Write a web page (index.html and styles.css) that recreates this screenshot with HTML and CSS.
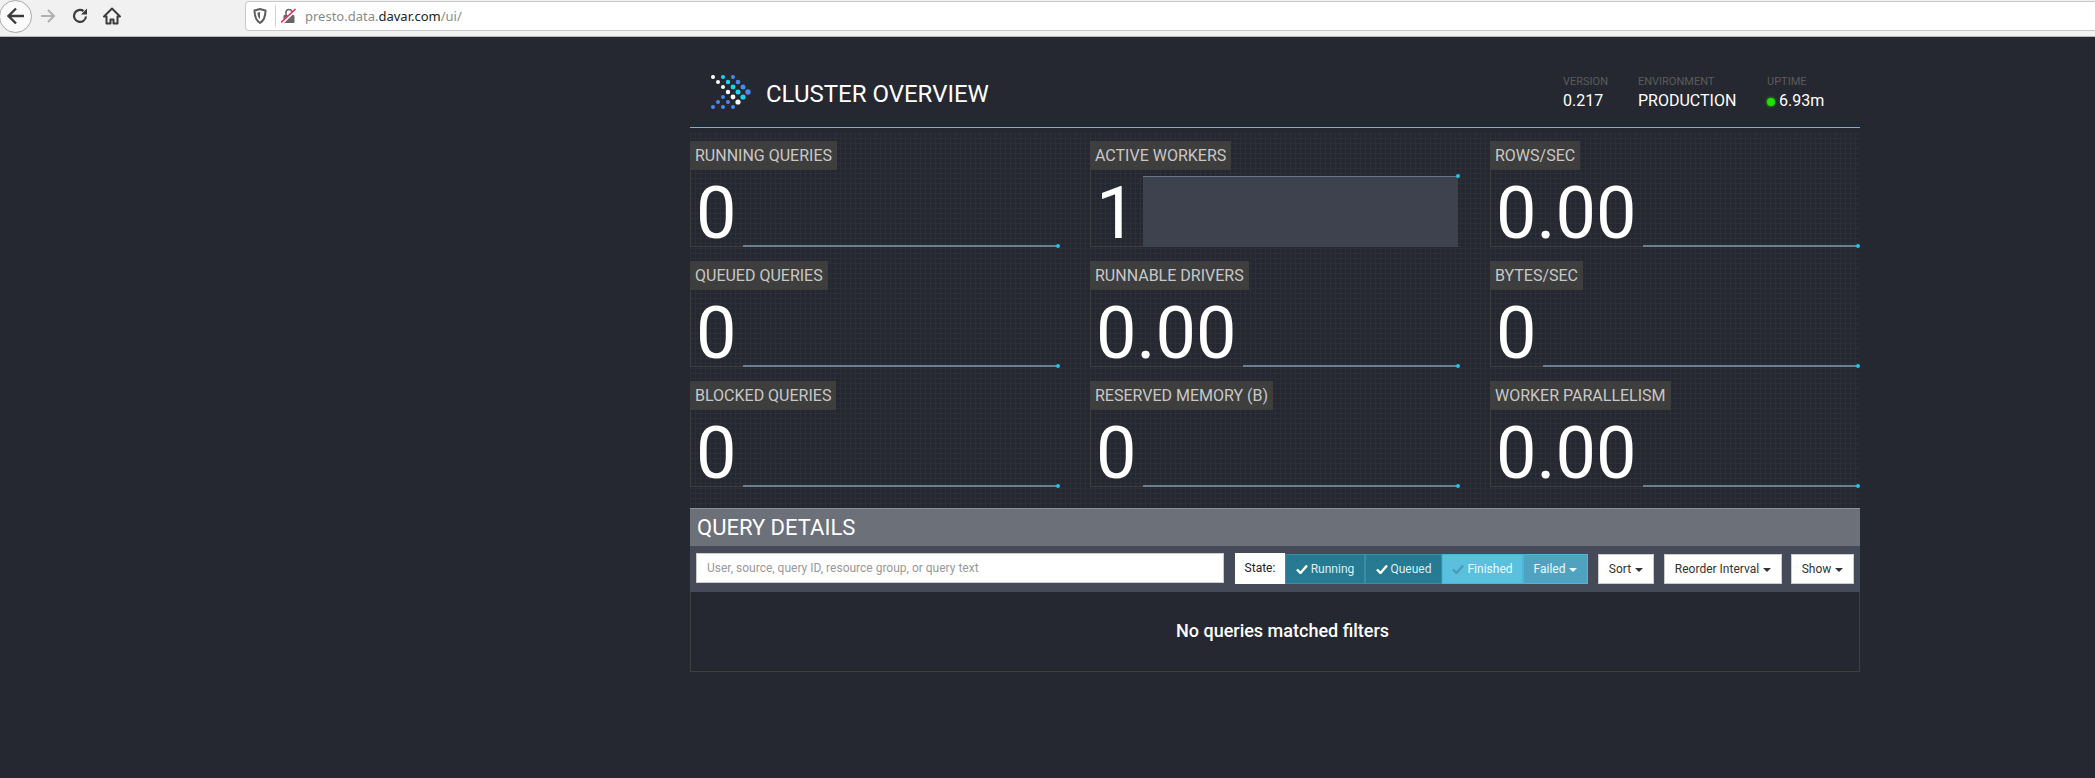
FILE: index.html
```html
<!DOCTYPE html>
<html lang="en">
<head>
<meta charset="utf-8">
<title>Cluster Overview</title>
<link rel="stylesheet" href="styles.css">
</head>
<body>
<div class="browser">
  <div class="nav-buttons">
    <span class="back"><svg width="28" height="28" viewBox="0 0 28 28"><path d="M22 14H7M14 6.500 6.500 14 14 21.500" fill="none" stroke="#3c3c3c" stroke-width="2.400"/></svg></span>
    <svg class="nav-icon forward" width="18" height="18" viewBox="0 0 18 18"><path d="M2 9h13M9 3l6 6-6 6" fill="none" stroke="#b0b0b0" stroke-width="2"/></svg>
    <svg class="nav-icon reload" width="18" height="18" viewBox="0 0 18 18"><path d="M15 9.500A6 6 0 1 1 12.500 4" fill="none" stroke="#3c3c3c" stroke-width="2.200"/><path d="M16 1.500V7.500H10Z" fill="#3c3c3c"/></svg>
    <svg class="nav-icon home" width="18" height="18" viewBox="0 0 18 18"><path d="M9 1.500 1 9.500h2.500v7h4v-4h3v4h4v-7H17Z" fill="none" stroke="#3c3c3c" stroke-width="2" stroke-linejoin="round"/></svg>
  </div>
  <div class="urlbar">
    <svg class="shield" width="14" height="16" viewBox="0 0 14 16"><path d="M1.500 2.500 7 1l5.500 1.500c0 6-1.500 10-5.500 12.500C3 12.500 1.500 8.500 1.500 2.500Z" fill="none" stroke="#5c5c5c" stroke-width="2"/><path d="M7 4v7c-2-1.500-2.500-4-2.500-6.300Z" fill="#5c5c5c"/></svg>
    <span class="divider"></span>
    <svg class="lock" width="16" height="16" viewBox="0 0 16 16"><path d="M5 7V4.500a3 3 0 0 1 6 0V7" fill="none" stroke="#666" stroke-width="1.600"/><rect x="2.500" y="7" width="11" height="8" rx="1" fill="#666"/><path d="M1 15 15 1.500" stroke="#fff" stroke-width="3"/><path d="M0 14.500 14.500 1" stroke="#f0244f" stroke-width="1.600"/></svg>
    <span class="url"><span class="faint">presto.data.</span>davar.com<span class="faint">/ui/</span></span>
  </div>
</div>

<main class="container">
  <header class="page-header">
    <svg class="logo" width="44" height="36" viewBox="0 0 44 36">
      <circle cx="3" cy="3" r="2" fill="#fff"/><circle cx="13" cy="3" r="2" fill="#16d5f5"/><circle cx="23" cy="3" r="2" fill="#4a8af0"/>
      <circle cx="8" cy="8" r="2" fill="#fff"/><circle cx="18" cy="8" r="2.200" fill="#16d5f5"/><circle cx="28" cy="8" r="2.300" fill="#4a8af0"/>
      <circle cx="13" cy="13" r="2" fill="#fff"/><circle cx="23" cy="13" r="2.400" fill="#16d5f5"/><circle cx="33" cy="13" r="2.500" fill="#4a8af0"/>
      <circle cx="18" cy="18" r="2.200" fill="#fff"/><circle cx="28" cy="18" r="2.500" fill="#16d5f5"/><circle cx="38" cy="18" r="2.700" fill="#4a8af0"/>
      <circle cx="13" cy="23" r="2" fill="#4a8af0"/><circle cx="23" cy="23" r="2.400" fill="#fff"/><circle cx="33" cy="23" r="2.600" fill="#16d5f5"/>
      <circle cx="8" cy="28" r="2" fill="#4a8af0"/><circle cx="18" cy="28" r="2" fill="#4a8af0"/><circle cx="28" cy="28" r="2.600" fill="#fff"/>
      <circle cx="3" cy="33" r="2" fill="#4a8af0"/><circle cx="13" cy="33" r="2" fill="#4a8af0"/><circle cx="23" cy="33" r="2" fill="#4a8af0"/>
    </svg>
    <h1 class="title">CLUSTER OVERVIEW</h1>
    <div class="meta">
      <div class="meta-item meta-version"><div class="meta-label">VERSION</div><div class="meta-value">0.217</div></div>
      <div class="meta-item meta-env"><div class="meta-label">ENVIRONMENT</div><div class="meta-value">PRODUCTION</div></div>
      <div class="meta-item meta-uptime"><div class="meta-label">UPTIME</div><div class="meta-value"><span class="status-dot"></span>6.93m</div></div>
    </div>
  </header>

  <section class="stats">
    <article class="stat">
      <div class="stat-label">RUNNING QUERIES</div>
      <div class="stat-box"><span class="stat-value">0</span><span class="spark"><i class="spark-dot"></i></span></div>
    </article>
    <article class="stat">
      <div class="stat-label">ACTIVE WORKERS</div>
      <div class="stat-box"><span class="stat-value">1</span><span class="spark spark-full"><i class="spark-dot spark-dot-top"></i></span></div>
    </article>
    <article class="stat">
      <div class="stat-label">ROWS/SEC</div>
      <div class="stat-box"><span class="stat-value">0.00</span><span class="spark"><i class="spark-dot"></i></span></div>
    </article>
    <article class="stat">
      <div class="stat-label">QUEUED QUERIES</div>
      <div class="stat-box"><span class="stat-value">0</span><span class="spark"><i class="spark-dot"></i></span></div>
    </article>
    <article class="stat">
      <div class="stat-label">RUNNABLE DRIVERS</div>
      <div class="stat-box"><span class="stat-value">0.00</span><span class="spark"><i class="spark-dot"></i></span></div>
    </article>
    <article class="stat">
      <div class="stat-label">BYTES/SEC</div>
      <div class="stat-box"><span class="stat-value">0</span><span class="spark"><i class="spark-dot"></i></span></div>
    </article>
    <article class="stat">
      <div class="stat-label">BLOCKED QUERIES</div>
      <div class="stat-box"><span class="stat-value">0</span><span class="spark"><i class="spark-dot"></i></span></div>
    </article>
    <article class="stat">
      <div class="stat-label">RESERVED MEMORY (B)</div>
      <div class="stat-box"><span class="stat-value">0</span><span class="spark"><i class="spark-dot"></i></span></div>
    </article>
    <article class="stat">
      <div class="stat-label">WORKER PARALLELISM</div>
      <div class="stat-box"><span class="stat-value">0.00</span><span class="spark"><i class="spark-dot"></i></span></div>
    </article>
  </section>

  <section class="details">
    <h2 class="details-title">QUERY DETAILS</h2>
    <div class="toolbar">
      <input class="search" type="text" placeholder="User, source, query ID, resource group, or query text">
      <div class="state-group">
        <span class="state-label">State:</span>
        <button class="state-btn on btn-running"><svg class="check" width="12" height="10" viewBox="0 0 12 10"><path d="M1 5.500 4.500 9 11 1.500" fill="none" stroke="currentColor" stroke-width="2.400"/></svg>Running</button>
        <button class="state-btn on btn-queued"><svg class="check" width="12" height="10" viewBox="0 0 12 10"><path d="M1 5.500 4.500 9 11 1.500" fill="none" stroke="currentColor" stroke-width="2.400"/></svg>Queued</button>
        <button class="state-btn btn-finished"><svg class="check check-dim" width="12" height="10" viewBox="0 0 12 10"><path d="M1 5.500 4.500 9 11 1.500" fill="none" stroke="currentColor" stroke-width="2.400"/></svg>Finished</button>
        <button class="state-btn btn-failed">Failed<i class="caret"></i></button>
      </div>
      <button class="tool-btn btn-sort">Sort<i class="caret"></i></button>
      <button class="tool-btn btn-reorder">Reorder Interval<i class="caret"></i></button>
      <button class="tool-btn btn-show">Show<i class="caret"></i></button>
    </div>
    <div class="empty">No queries matched filters</div>
  </section>
</main>
</body>
</html>
```
FILE: styles.css
```css
* { box-sizing: border-box; }
html, body { margin: 0; padding: 0; height: 100%; }
body {
  background: #252830;
  color: #fff;
  font-family: Roboto, "Liberation Sans", sans-serif;
  overflow: hidden;
}

.browser {
  height: 37px;
  background: #f1f1f1;
  border-bottom: 1px solid #b8b8b8;
  display: flex;
  align-items: flex-start;
}
.nav-buttons { width: 245px; display: flex; align-items: center; height: 32px; }
.back {
  width: 33px; height: 33px; margin-left: -1px;
  border-radius: 50%;
  background: #fbfbfb;
  border: 1px solid #a8a8a8;
  display: flex; align-items: center; justify-content: center;
}
.nav-icon { flex: none; }
.forward { margin-left: 7px; }
.reload { margin-left: 14px; }
.home { margin-left: 14px; }
.urlbar {
  flex: 1;
  height: 30px;
  margin-top: 1px;
  background: #fff;
  border: 1px solid #c8c8c8;
  border-right: 0;
  border-radius: 4px 0 0 4px;
  display: flex;
  align-items: center;
  padding-left: 7px;
  font-family: "Noto Sans", sans-serif;
  font-size: 13px;
}
.shield { flex: none; }
.divider { width: 1px; height: 22px; background: #d0d0d0; margin: 0 5px 0 8px; }
.lock { margin-right: 8px; flex: none; }
.url { color: #222; }
.faint { color: #8a8a8a; }

.container { width: 1170px; margin-left: 690px; }

.page-header {
  height: 91px;
  border-bottom: 1px solid #3fcbe8;
  display: flex;
  align-items: flex-start;
  padding-left: 20px;
}
.logo { margin-top: 37px; flex: none; }
.title {
  margin: 43px 0 0 12px;
  font-size: 24px;
  font-weight: 400;
  line-height: 28px;
}
.meta { margin-left: auto; display: flex; padding-top: 38px; }
.meta-label { font-size: 11px; line-height: 14px; color: #5c5c5c; }
.meta-value { font-size: 16px; line-height: 20px; margin-top: 2px; white-space: nowrap; }
.meta-version { width: 75px; }
.meta-env { width: 129px; }
.meta-uptime { width: 93px; }
.status-dot {
  display: inline-block;
  width: 8px; height: 8px;
  margin: 0 4px 0 0;
  border-radius: 50%;
  background: #22e000;
  box-shadow: 0 0 3px #22e000;
}

.stats {
  display: grid;
  grid-template-columns: repeat(3, 370px);
  column-gap: 30px;
  row-gap: 14px;
  margin-top: 5px;
  padding-top: 8px;
  padding-bottom: 21px;
  background-color: #252830;
  background-image:
    linear-gradient(#2c2f37 1px, transparent 1px),
    linear-gradient(90deg, #2c2f37 1px, transparent 1px);
  background-size: 5px 5px;
}
.stat { height: 106px; display: flex; flex-direction: column; align-items: flex-start; }
.stat-label {
  height: 29px;
  background: #3e3e3e;
  color: #c8c8c8;
  font-size: 16px;
  line-height: 29px;
  padding: 0 5px;
  white-space: nowrap;
}
.stat-box {
  flex: 1;
  width: 100%;
  border-left: 1px solid #3f3f3f;
  border-bottom: 1px solid #3f3f3f;
  display: flex;
  align-items: flex-end;
  padding-left: 5px;
}
.stat-value {
  font-size: 72px;
  font-weight: 400;
  line-height: 65px;
  color: #fff;
  flex: none;
  padding-right: 7px;
}
.spark {
  flex: 1;
  height: 71px;
  margin-right: 2px;
  margin-bottom: -1px;
  border-bottom: 2px solid #6e7f93;
  position: relative;
}
.spark-full {
  background: #3d424e;
  border-bottom: 0;
  border-top: 1px solid #6a7488;
}
.spark-dot {
  position: absolute;
  right: -2px;
  bottom: -3px;
  width: 4px; height: 4px;
  border-radius: 50%;
  background: #19c4e6;
}
.spark-dot-top { top: -3px; bottom: auto; }

.details-title {
  margin: 0;
  height: 38px;
  background: #6c7078;
  border-top: 1px solid #8c92a0;
  font-size: 22px;
  font-weight: 400;
  line-height: 37px;
  padding-left: 7px;
  color: #fff;
}
.toolbar {
  height: 46px;
  background: #444a58;
  display: flex;
  align-items: flex-start;
  padding: 7px 6px 0 6px;
}
.search {
  width: 528px;
  height: 30px;
  border: 1px solid #ccc;
  background: #fff;
  padding: 0 10px;
  font-family: Roboto, sans-serif;
  font-size: 12px;
  flex: none;
}
.search::placeholder { color: #999; opacity: 1; }
.state-group { display: flex; margin-left: 11px; height: 31px; font-size: 12px; }
.state-label {
  width: 50px;
  background: #fff;
  color: #222;
  text-align: center;
  line-height: 31px;
  font-size: 12px;
}
.state-btn {
  height: 30px;
  margin-top: 1px;
  border: 1px solid #3a8da6;
  color: #e8f4f8;
  font-family: Roboto, sans-serif;
  font-size: 12px;
  padding: 0;
  text-align: center;
}
.state-btn.on { background: #267a92; color: #dceef3; }
.btn-running { width: 80px; }
.btn-queued { width: 77px; }
.btn-finished { width: 81px; background: #5bc0de; border-color: #46b8da; color: #eef9fc; }
.btn-failed { width: 65px; background: #4fa3c0; border-color: #46b8da; color: #eef9fc; }
.check { color: #fff; margin-right: 3px; vertical-align: -1px; }
.check-dim { color: #4b9bb5; }
.caret {
  display: inline-block;
  width: 0; height: 0;
  margin-left: 4px;
  vertical-align: middle;
  border-top: 4px solid currentColor;
  border-left: 4px solid transparent;
  border-right: 4px solid transparent;
}
.tool-btn {
  height: 30px;
  margin-top: 1px;
  background: #fff;
  border: 1px solid #ccc;
  color: #333;
  font-family: Roboto, sans-serif;
  font-size: 12px;
  padding: 0;
  flex: none;
}
.btn-sort { width: 56px; margin-left: 10px; }
.btn-reorder { width: 118px; margin-left: 10px; }
.btn-show { width: 63px; margin-left: 9px; }

.empty {
  height: 80px;
  border: 1px solid #3f3f3f;
  border-top: 0;
  padding-left: 15px;
  text-align: center;
  font-size: 18px;
  font-weight: 500;
  line-height: 77px;
  color: #fff;
}
```
